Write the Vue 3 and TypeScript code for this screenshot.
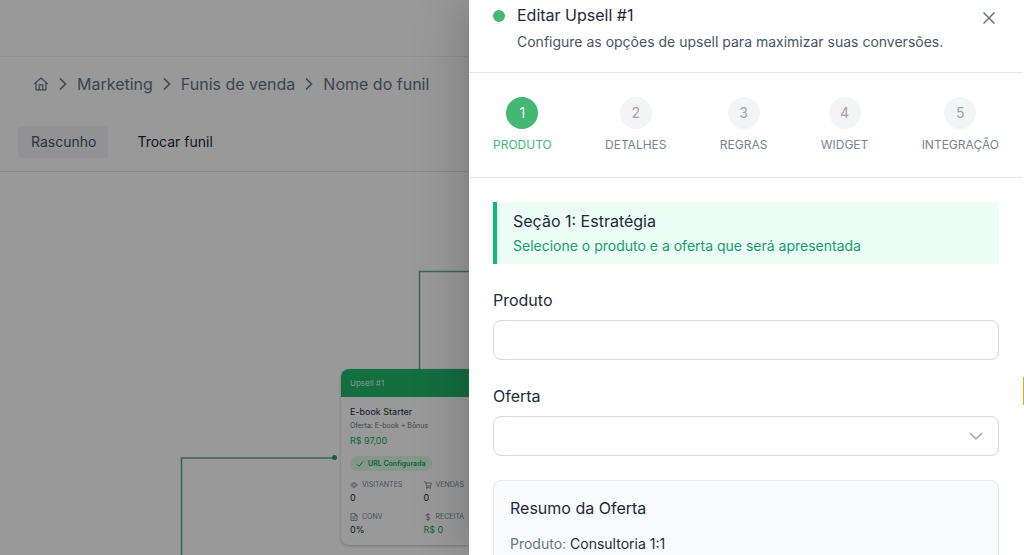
<script setup lang="ts">
import { ref } from 'vue'

const crumbs: string[] = ['Marketing', 'Funis de venda', 'Nome do funil']
const steps: string[] = ['PRODUTO', 'DETALHES', 'REGRAS', 'WIDGET', 'INTEGRAÇÃO']
const current = ref(0)
const product = ref('')
const offer = ref('')
</script>

<template>
  <div class="stage">
    <div class="screen">
      <div class="page">
        <div class="topbar"></div>
        <header class="funnel-head">
          <nav class="crumbs" aria-label="Navegação">
            <a href="#" class="home" aria-label="Início">
              <svg viewBox="0 0 16 16" width="16" height="16" fill="none" stroke="currentColor" stroke-width="1.2" stroke-linejoin="round" stroke-linecap="round">
                <path d="M1.5 7.6 8 2l6.5 5.6M3 6.500v7.300h10V6.500M6.200 13.600V8.800h3.600v4.800" />
              </svg>
            </a>
            <template v-for="c in crumbs" :key="c">
              <svg class="sep" viewBox="0 0 8 14" width="8" height="14" fill="none" stroke="currentColor" stroke-width="1.6">
                <path d="M1 1.500 6.500 7 1 12.500" />
              </svg>
              <a href="#">{{ c }}</a>
            </template>
          </nav>
          <div class="actions">
            <button type="button" class="draft">Rascunho</button>
            <button type="button" class="swap">Trocar funil</button>
          </div>
        </header>
        <div class="canvas">
          <svg class="wires" width="700" height="400" viewBox="0 0 700 400" fill="none" stroke="#5ea888" stroke-width="1.5">
            <path d="M419.500 197V99.500H700" />
            <path d="M181.500 400V286H334" />
          </svg>
          <span class="port"></span>
          <article class="node">
            <h3>Upsell #1</h3>
            <div class="node-body">
              <strong>E-book Starter</strong>
              <span class="node-offer">Oferta: E-book + Bônus</span>
              <span class="node-price">R$ 97,00</span>
              <span class="chip">
                <svg viewBox="0 0 8 8" width="8" height="8" fill="none" stroke="currentColor" stroke-width="1"><path d="M1 4.300 3 6.300 7 1.600" /></svg>
                URL Configurada
              </span>
              <dl class="stats">
                <div>
                  <dt>
                    <svg viewBox="0 0 16 16" width="8" height="8" fill="none" stroke="currentColor" stroke-width="1.5"><path d="M1 8c3-6 11-6 14 0-3 6-11 6-14 0z" /><circle cx="8" cy="8" r="3" /></svg>
                    VISITANTES
                  </dt>
                  <dd>0</dd>
                </div>
                <div>
                  <dt>
                    <svg viewBox="0 0 16 16" width="8" height="8" fill="none" stroke="currentColor" stroke-width="1.7"><path d="M0 1.500h3L5 10h8l2-6H4M4 12.500h10" /><circle cx="5.5" cy="14" r="1" /><circle cx="12.5" cy="14" r="1" /></svg>
                    VENDAS
                  </dt>
                  <dd>0</dd>
                </div>
                <div>
                  <dt>
                    <svg viewBox="0 0 16 16" width="8" height="8" fill="none" stroke="currentColor" stroke-width="1.7"><path d="M2 1h8l4 4v10H2zM10 1v4h4M5 8h6M5 11.500h6" /></svg>
                    CONV
                  </dt>
                  <dd>0%</dd>
                </div>
                <div>
                  <dt>
                    <svg viewBox="0 0 16 16" width="8" height="8" fill="none" stroke="currentColor" stroke-width="1.7"><path d="M8 0v16M12 4.500C11 2 4 2 4 5s8 3 8 6-7 3-8 .5" /></svg>
                    RECEITA
                  </dt>
                  <dd class="money">R$ 0</dd>
                </div>
              </dl>
            </div>
          </article>
        </div>
      </div>

      <div class="overlay">
        <section class="panel" role="dialog" aria-labelledby="panel-title">
          <header class="panel-head">
            <span class="dot"></span>
            <div class="heading">
              <h1 id="panel-title">Editar Upsell #1</h1>
              <p>Configure as opções de upsell para maximizar suas conversões.</p>
            </div>
            <button type="button" class="close" aria-label="Fechar">
              <svg viewBox="0 0 14 14" width="14" height="14" fill="none" stroke="currentColor" stroke-width="1.5"><path d="m1.500 1.500 11 11m0-11-11 11" /></svg>
            </button>
          </header>

          <nav class="steps" aria-label="Etapas">
            <button
              v-for="(s, i) in steps"
              :key="s"
              type="button"
              class="step"
              :class="{ active: i === current }"
              @click="current = i"
            >
              <span class="num">{{ i + 1 }}</span>
              <span>{{ s }}</span>
            </button>
          </nav>

          <div class="content">
            <div class="notice">
              <h2>Seção 1: Estratégia</h2>
              <p>Selecione o produto e a oferta que será apresentada</p>
            </div>

            <div class="field">
              <label for="product">Produto</label>
              <input id="product" v-model="product" type="text" />
            </div>

            <div class="field">
              <label for="offer">Oferta</label>
              <div class="select">
                <select id="offer" v-model="offer">
                  <option value=""></option>
                </select>
                <svg viewBox="0 0 14 8" width="14" height="8" fill="none" stroke="currentColor" stroke-width="1.5"><path d="m1 1 6 6 6-6" /></svg>
              </div>
            </div>

            <div class="summary">
              <h2>Resumo da Oferta</h2>
              <p>Produto: <b>Consultoria 1:1</b></p>
            </div>
          </div>
        </section>
      </div>
    </div>
    <div class="edge"><span class="edge-node"></span></div>
  </div>
</template>

<style>
body {
  margin: 0;
  overflow: hidden;
}
</style>

<style scoped>
* {
  box-sizing: border-box;
}

h1, h2, h3, p, dl, dd {
  margin: 0;
  font-weight: 400;
}

button {
  border: 0;
  padding: 0;
  background: none;
  font: inherit;
  color: inherit;
  cursor: pointer;
}

a {
  color: inherit;
  text-decoration: none;
}

svg {
  display: block;
  flex: none;
}

.stage {
  display: grid;
  grid-template-columns: 1fr 1px;
  height: 100vh;
  overflow: hidden;
  font-family: Inter, "Liberation Sans", sans-serif;
  font-size: 16px;
  line-height: 24px;
  color: #1e293b;
  background: #fff;
}

.screen {
  position: relative;
  overflow: hidden;
}

.page {
  display: flex;
  flex-direction: column;
  height: 100%;
}

.topbar {
  height: 57px;
  border-bottom: 1px solid #eeeff2;
}

.funnel-head {
  padding: 15px 18px 13px;
  border-bottom: 1px solid #e5e7eb;
}

.crumbs {
  display: flex;
  align-items: center;
  gap: 10px;
  padding-left: 15px;
  color: #64748b;
}

.sep {
  color: #64748b;
}

.actions {
  display: flex;
  gap: 16px;
  margin-top: 30px;
  font-size: 14px;
  line-height: 20px;
}

.actions button {
  padding: 6px 12px 6px 13px;
  border-radius: 4px;
}

.draft {
  background: #f3f4f8;
  color: #475569;
}

.canvas {
  position: relative;
  flex: 1;
  overflow: hidden;
}

.wires {
  position: absolute;
  left: 0;
  top: 0;
}

.port {
  position: absolute;
  left: 332px;
  top: 283px;
  width: 5px;
  height: 5px;
  border-radius: 50%;
  background: #16a864;
}

.node {
  position: absolute;
  left: 341px;
  top: 197px;
  width: 165px;
  border-radius: 8px;
  overflow: hidden;
  background: #fff;
  box-shadow: 0 1px 3px rgba(0, 0, 0, 0.25);
}

.node h3 {
  padding: 6px 9px;
  font-size: 8px;
  line-height: 16px;
  background: #21b86c;
  color: #d8f5e5;
}

.node-body {
  display: flex;
  flex-direction: column;
  align-items: flex-start;
  padding: 8px 9px;
}

.node-body strong {
  font-size: 9px;
  line-height: 14px;
  font-weight: 400;
}

.node-offer {
  font-size: 7px;
  line-height: 14px;
  color: #64748b;
}

.node-price {
  font-size: 9px;
  line-height: 16px;
  color: #16a864;
}

.chip {
  display: flex;
  align-items: center;
  gap: 4px;
  margin-top: 7px;
  padding: 0 6px;
  border-radius: 8px;
  font-size: 7px;
  line-height: 15px;
  font-weight: 600;
  background: #dcfce7;
  color: #16a864;
}

.stats {
  display: grid;
  grid-template-columns: 1fr 1fr;
  width: 100%;
  row-gap: 6px;
  margin-top: 8px;
}

dt {
  display: flex;
  align-items: center;
  gap: 4px;
  font-size: 7px;
  line-height: 12px;
  color: #7c8798;
}

dd {
  font-size: 9px;
  line-height: 14px;
}

.money {
  color: #16a864;
}

.overlay {
  position: absolute;
  inset: 0;
  display: grid;
  grid-template-columns: 469fr 554fr;
  background: rgba(0, 0, 0, 0.4);
}

.panel {
  grid-column: 2;
  min-width: 0;
  overflow: hidden;
  background: #fff;
  box-shadow: 0 0 48px rgba(0, 0, 0, 0.25);
}

.panel-head {
  display: flex;
  gap: 12px;
  padding: 3px 27px 20px 24px;
  border-bottom: 1px solid #e5e7eb;
}

.dot {
  width: 12px;
  height: 12px;
  margin-top: 7px;
  border-radius: 50%;
  background: #42b872;
}

.heading {
  flex: 1;
}

h1, h2 {
  font-size: 16px;
  line-height: 24px;
  color: #1e293b;
}

.heading p {
  margin-top: 5px;
  font-size: 14px;
  line-height: 20px;
  color: #475569;
}

.close {
  align-self: flex-start;
  margin-top: 8px;
  color: #64748b;
}

.steps {
  display: flex;
  justify-content: space-between;
  padding: 24px 24px 22px;
  border-bottom: 1px solid #e5e7eb;
}

.step {
  display: flex;
  flex-direction: column;
  align-items: center;
  gap: 6px;
  font-size: 12px;
  line-height: 20px;
  color: #7b8294;
}

.num {
  width: 32px;
  border-radius: 50%;
  font-size: 14px;
  line-height: 32px;
  text-align: center;
  background: #f3f4f6;
  color: #9ca3af;
}

.active {
  color: #42b872;
}

.active .num {
  background: #42b872;
  color: #fff;
}

.content {
  display: flex;
  flex-direction: column;
  gap: 24px;
  padding: 24px;
}

.notice {
  padding: 7px 16px 8px;
  border-left: 4px solid #10b981;
  background: #ebfdf5;
}

.notice p {
  margin-top: 3px;
  font-size: 14px;
  line-height: 20px;
  color: #159e6c;
}

.field {
  display: flex;
  flex-direction: column;
  gap: 8px;
}

input,
select {
  width: 100%;
  height: 40px;
  padding: 8px 12px;
  border: 1px solid #d5d9e1;
  border-radius: 8px;
  background: #fff;
  font: inherit;
  color: inherit;
  appearance: none;
}

.select {
  display: grid;
  align-items: center;
}

.select > * {
  grid-area: 1 / 1;
}

.select svg {
  justify-self: end;
  margin-right: 16px;
  color: #a3a3a3;
  pointer-events: none;
}

.summary {
  padding: 15px 16px;
  border: 1px solid #e2e8f0;
  border-radius: 8px;
  background: #f8fafc;
}

.summary p {
  margin-top: 14px;
  font-size: 14px;
  line-height: 20px;
  color: #64748b;
}

.summary b {
  font-weight: 400;
  color: #1e293b;
}

.edge {
  padding-top: 377px;
}

.edge-node {
  display: block;
  height: 28px;
  background: #f0a020;
}
</style>
